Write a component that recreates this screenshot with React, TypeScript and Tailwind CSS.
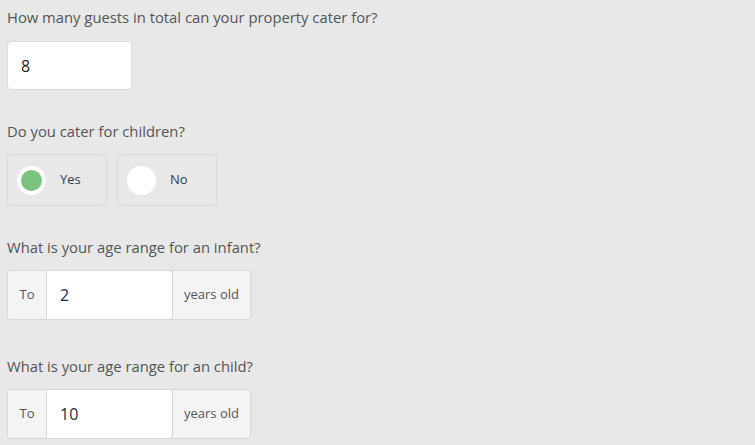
import React from "react";

const font = { fontFamily: '"Open Sans", "Noto Sans", sans-serif' };

function Label({ children }: { children: React.ReactNode }) {
  return <div className="text-[14.8px] leading-[20px] text-[#555555]">{children}</div>;
}

function RangeGroup({ value }: { value: string }) {
  return (
    <div className="mt-[13px] flex h-[50px] w-[244px] rounded-[4px] border border-[#d8d8d8] overflow-hidden">
      <div className="flex w-[39px] items-center justify-center bg-[#f4f4f4] text-[13px] text-[#555555] border-r border-[#d8d8d8]">To</div>
      <div className="flex w-[125px] items-center bg-white pl-[13px] text-[16px] text-[#222a44] rounded-r-[4px]">{value}</div>
      <div className="flex flex-1 items-center justify-center bg-[#f4f4f4] text-[13px] text-[#555555] border-l border-[#d8d8d8]">years old</div>
    </div>
  );
}

function Radio({ label, checked }: { label: string; checked?: boolean }) {
  return (
    <div className="flex h-[52px] w-[100px] items-center rounded-[4px] border border-[#dadada] pl-[9px]">
      <div className="flex h-[29px] w-[29px] items-center justify-center rounded-full bg-white">
        {checked && <div className="h-[21px] w-[21px] rounded-full bg-[#7bc47f]" />}
      </div>
      <span className="ml-[14px] text-[13px] text-[#333a55]">{label}</span>
    </div>
  );
}

export default function App() {
  return (
    <div className="min-h-[445px] w-[755px] bg-[#e8e8e8] px-[7px] pt-[7px]" style={font}>
      <Label>How many guests in total can your property cater for?</Label>
      <div className="mt-[14px] flex h-[49px] w-[125px] items-center rounded-[4px] border border-[#dcdcdc] bg-white pl-[13px] text-[16px] text-[#222222]">8</div>

      <div className="mt-[31px]">
        <Label>Do you cater for children?</Label>
      </div>
      <div className="mt-[13px] flex gap-[10px]">
        <Radio label="Yes" checked />
        <Radio label="No" />
      </div>

      <div className="mt-[31px]">
        <Label>What is your age range for an infant?</Label>
      </div>
      <RangeGroup value="2" />

      <div className="mt-[36px]">
        <Label>What is your age range for an child?</Label>
      </div>
      <RangeGroup value="10" />
    </div>
  );
}
